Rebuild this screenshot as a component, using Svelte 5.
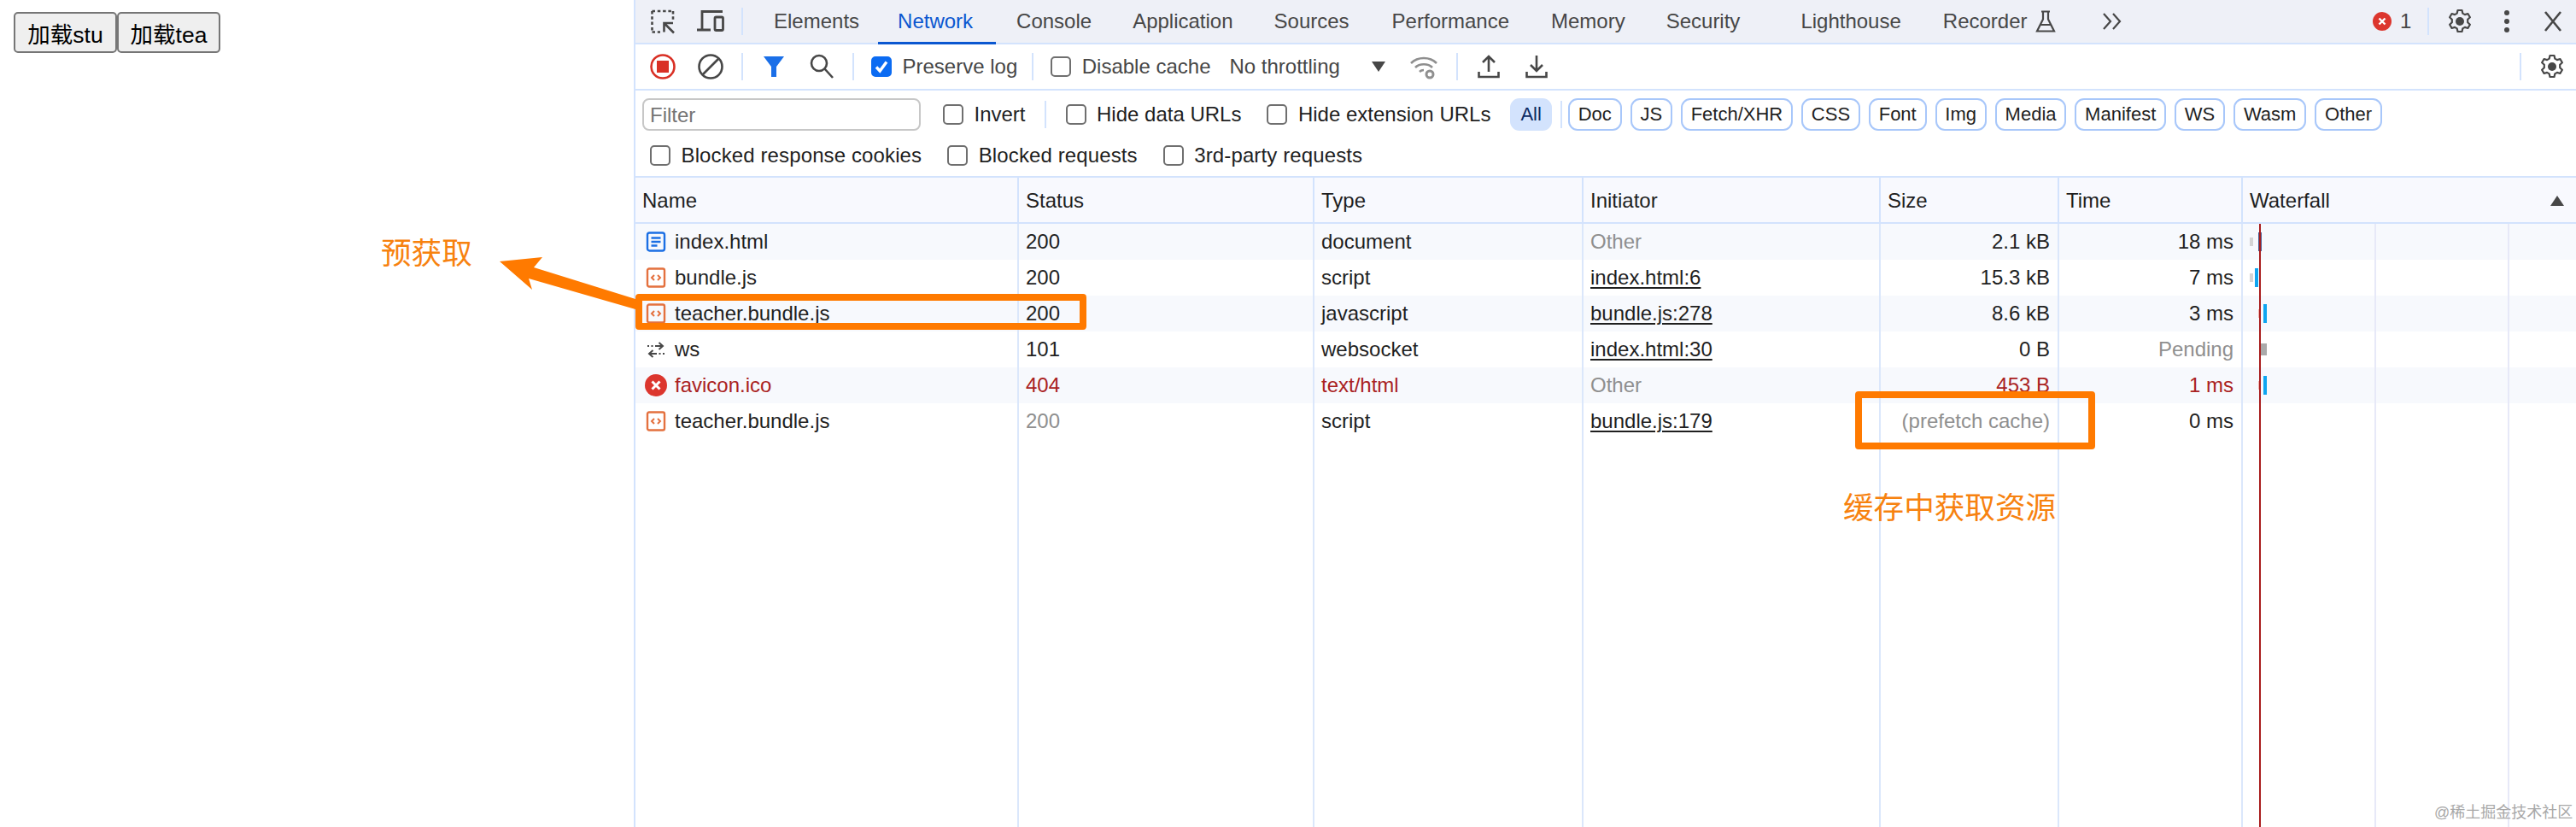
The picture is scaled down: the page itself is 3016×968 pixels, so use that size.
<script>
  const tabs = ['Elements', 'Network', 'Console', 'Application', 'Sources', 'Performance', 'Memory', 'Security'];
  const pills = ['Doc', 'JS', 'Fetch/XHR', 'CSS', 'Font', 'Img', 'Media', 'Manifest', 'WS', 'Wasm', 'Other'];
  const head = ['Name', 'Status', 'Type', 'Initiator', 'Size', 'Time'];
  const rows = [
    { icon: 'doc', name: 'index.html', status: '200', type: 'document', init: 'Other', size: '2.1 kB', time: '18 ms',
      bars: [{ l: 8, t: 16, w: 4, h: 10, c: '#d4d4d4' }, { l: 18, t: 10, w: 4, h: 22, c: '#4a5f94' }] },
    { icon: 'script', name: 'bundle.js', status: '200', type: 'script', init: 'index.html:6', size: '15.3 kB', time: '7 ms',
      bars: [{ l: 8, t: 16, w: 4, h: 10, c: '#d4d4d4' }, { l: 14, t: 10, w: 4, h: 22, c: '#0ea5f0' }] },
    { icon: 'script', name: 'teacher.bundle.js', status: '200', type: 'javascript', init: 'bundle.js:278', size: '8.6 kB', time: '3 ms',
      bars: [{ l: 18, t: 16, w: 2, h: 10, c: '#f3b3ae' }, { l: 24, t: 10, w: 4, h: 22, c: '#0ea5f0' }] },
    { icon: 'ws', name: 'ws', status: '101', type: 'websocket', init: 'index.html:30', size: '0 B', time: 'Pending', timeDim: true,
      bars: [{ l: 21, t: 14, w: 7, h: 14, c: '#aaaaaa' }] },
    { icon: 'err', name: 'favicon.ico', status: '404', type: 'text/html', init: 'Other', size: '453 B', time: '1 ms', err: true,
      bars: [{ l: 18, t: 16, w: 2, h: 10, c: '#f3b3ae' }, { l: 24, t: 10, w: 4, h: 22, c: '#0ea5f0' }] },
    { icon: 'script', name: 'teacher.bundle.js', status: '200', statusDim: true, type: 'script', init: 'bundle.js:179', size: '(prefetch cache)', sizeDim: true, time: '0 ms', bars: [] }
  ];
  const isLink = (r) => r.init !== 'Other';
</script>

{#snippet gear()}
  <svg class="i30" viewBox="0 0 30 30" fill="none" stroke="#474747" stroke-width="2.2" stroke-linejoin="round">
    <path d="M12.500 2h5l.8 3.600 2.600 1.500 3.500-1.100 2.500 4.300-2.700 2.500v3.400l2.700 2.500-2.500 4.300-3.500-1.100-2.600 1.500-.8 3.600h-5l-.8-3.600-2.600-1.500-3.500 1.100-2.500-4.300 2.700-2.500v-3.400l-2.700-2.500 2.500-4.300 3.500 1.100 2.600-1.500z"/>
    <circle cx="15" cy="15" r="5" fill="#474747" stroke="none"/>
  </svg>
{/snippet}

{#snippet check(label, on)}
  <span class="chk">
    <span class="box" class:on>
      {#if on}
        <svg viewBox="0 0 24 24" fill="none" stroke="#fff" stroke-width="3.400"><path d="M6 12.500l4.200 4.500L18 6.500"/></svg>
      {/if}
    </span>
    {label}
  </span>
{/snippet}

{#snippet rowIcon(kind)}
  {#if kind === 'doc'}
    <svg class="ri" viewBox="0 0 24 24" fill="none" stroke="#1b6fe4" stroke-width="2.400"><rect x="2" y="1.500" width="20" height="21" rx="2.500"/><path d="M6.500 7.500h11M6.500 12h11M6.500 16.500h7"/></svg>
  {:else if kind === 'script'}
    <svg class="ri" viewBox="0 0 24 24" fill="none" stroke="#e4713f" stroke-width="2.400"><rect x="2" y="1.500" width="20" height="21" rx="2"/><path d="M10 9l-3 3 3 3M14 9l3 3-3 3" stroke-width="2"/></svg>
  {:else if kind === 'ws'}
    <svg class="ri" viewBox="0 0 24 24" fill="none" stroke="#474747" stroke-width="2"><path d="M2 8h2M6.500 8h2M11 8h8M15.500 4l4.500 4-4.500 4" /><path d="M22 17h-2M17.500 17h-2M13 17H5M8.500 13L4 17l4.500 4" /></svg>
  {:else}
    <svg class="ri big" viewBox="0 0 26 26"><circle cx="13" cy="13" r="13" fill="#dc362e"/><path d="M8.500 8.500l9 9M17.500 8.500l-9 9" stroke="#fff" stroke-width="3"/></svg>
  {/if}
{/snippet}

<div class="screen">
  <section class="page">
    <button>加载stu</button><button class="second">加载tea</button>
  </section>

  <section class="devtools">
    <div class="bar tabs">
      <span class="btn">
        <svg class="i30" viewBox="0 0 30 30" fill="none" stroke="#474747" stroke-width="2.600">
          <path d="M2.500 3h24.500M2.500 3v24.500" stroke-dasharray="3.500 2.800"/>
          <path d="M27 3v11M2.500 27.500H12" stroke-dasharray="3.500 2.800"/>
          <path d="M27 17H16.500V27.500M16.500 17L28 28.500" />
        </svg>
      </span>
      <span class="btn">
        <svg class="i34" viewBox="0 0 34 30" fill="none" stroke="#474747" stroke-width="2.800">
          <path d="M7 24V3.500h24"/><path d="M1 25h16" stroke-width="3"/><rect x="22" y="10" width="9.500" height="15.500" rx="1.500"/>
        </svg>
      </span>
      <span class="sep"></span>
      <div class="tablist">
        {#each tabs as t}
          <span class="tab" class:active={t === 'Network'} class:gap={t === 'Security'}>{t}</span>
        {/each}
        <span class="tab light">Lighthouse</span>
        <span class="tab recorder">
          Recorder
          <svg class="flask" viewBox="0 0 24 26" fill="none" stroke="#474747" stroke-width="2.200"><path d="M7 1.500h10M9 1.500v9L2 24.500h20l-7-14v-9M6 17h12"/></svg>
        </span>
      </div>
      <svg class="more" viewBox="0 0 24 22" fill="none" stroke="#474747" stroke-width="2.200"><path d="M2 2l8 9-8 9M13 2l8 9-8 9"/></svg>
      <span class="errs">
        <svg class="errdot" viewBox="0 0 22 22"><circle cx="11" cy="11" r="11" fill="#dc362e"/><path d="M7.500 7.500l7 7M14.500 7.500l-7 7" stroke="#fff" stroke-width="2.400"/></svg>
        1
      </span>
      <span class="sep"></span>
      <span class="btn">{@render gear()}</span>
      <span class="btn narrow">
        <svg class="i30" viewBox="0 0 30 30" fill="#474747"><circle cx="15" cy="5" r="3"/><circle cx="15" cy="15" r="3"/><circle cx="15" cy="25" r="3"/></svg>
      </span>
      <span class="btn narrow">
        <svg class="i30" viewBox="0 0 30 30" fill="none" stroke="#474747" stroke-width="2.600"><path d="M6 4l18 22M24 4L6 26"/></svg>
      </span>
    </div>

    <div class="bar tools">
      <span class="btn">
        <svg class="i30" viewBox="0 0 30 30"><circle cx="15" cy="15" r="13.500" fill="none" stroke="#d93025" stroke-width="2.600"/><rect x="8" y="8" width="14" height="14" fill="#d93025"/></svg>
      </span>
      <span class="btn">
        <svg class="i30" viewBox="0 0 30 30" fill="none" stroke="#474747" stroke-width="2.600"><circle cx="15" cy="15" r="13.500"/><path d="M24.500 5.500L5.500 24.500"/></svg>
      </span>
      <span class="sep"></span>
      <span class="btn">
        <svg class="i24" viewBox="0 0 24 24" fill="#1a6fe8"><path d="M0 0h24L15 12v12H9V12z"/></svg>
      </span>
      <span class="btn">
        <svg class="i30" viewBox="0 0 30 30" fill="none" stroke="#474747" stroke-width="2.600"><circle cx="12" cy="11" r="9"/><path d="M18.500 17.500L28 28"/></svg>
      </span>
      <span class="sep"></span>
      <span class="m12"></span>
      {@render check('Preserve log', true)}
      <span class="sep sep-a"></span>
      {@render check('Disable cache', false)}
      <span class="throttle">No throttling</span>
      <span class="tri"></span>
      <svg class="wifi" viewBox="0 0 32 32" fill="none" stroke="#8f8f8f" stroke-width="2.600">
        <path d="M1 12c8-8 22-8 30 0M6 17c5-5 15-5 20 0M11 22c1.500-1.500 3-2 5-2"/>
        <circle cx="23" cy="25" r="4" stroke-width="3"/>
      </svg>
      <span class="sep sep-b"></span>
      <span class="btn">
        <svg class="i30" viewBox="0 0 30 30" fill="none" stroke="#474747" stroke-width="2.600"><path d="M15 21V3M8 10l7-7 7 7M3.500 21v6h23v-6"/></svg>
      </span>
      <span class="btn">
        <svg class="i30" viewBox="0 0 30 30" fill="none" stroke="#474747" stroke-width="2.600"><path d="M15 2v18M8 13l7 7 7-7M3.500 21v6h23v-6"/></svg>
      </span>
      <span class="sep push"></span>
      <span class="btn">{@render gear()}</span>
    </div>

    <div class="bar filters">
      <span class="filter">Filter</span>
      <span class="m26"></span>
      {@render check('Invert', false)}
      <span class="sep sep-c"></span>
      {@render check('Hide data URLs', false)}
      <span class="m30"></span>
      {@render check('Hide extension URLs', false)}
      <span class="pill all">All</span>
      <span class="sep sep-d"></span>
      <div class="pills">
        {#each pills as p}
          <span class="pill">{p}</span>
        {/each}
      </div>
    </div>

    <div class="bar blocked">
      {@render check('Blocked response cookies', false)}
      {@render check('Blocked requests', false)}
      {@render check('3rd-party requests', false)}
    </div>

    <div class="table">
      <div class="row header">
        {#each head as h}<span class="cell">{h}</span>{/each}
        <span class="cell wfh">Waterfall<span class="sort"></span></span>
      </div>
      {#each rows as r, i}
        <div class="row" class:striped={i % 2 === 0} class:err={r.err}>
          <span class="cell namecell">{@render rowIcon(r.icon)}{r.name}</span>
          <span class="cell" class:dim={r.statusDim}>{r.status}</span>
          <span class="cell">{r.type}</span>
          <span class="cell" class:dim={!isLink(r)} class:link={isLink(r)}>{r.init}</span>
          <span class="cell num" class:dim={r.sizeDim}>{r.size}</span>
          <span class="cell num" class:dim={r.timeDim}>{r.time}</span>
          <span class="cell wf">
            {#each r.bars as b}
              <i class="barb" style="left:{b.l}px;top:{b.t}px;width:{b.w}px;height:{b.h}px;background:{b.c}"></i>
            {/each}
          </span>
        </div>
      {/each}
      <div class="row filler">
        {#each Array(7) as _}<span class="cell"></span>{/each}
      </div>
      <i class="gridline g1"></i>
      <i class="gridline g2"></i>
      <i class="redline"></i>
    </div>
  </section>

  <svg class="arrow" viewBox="0 0 3016 968" aria-hidden="true">
    <path d="M585 306L635 301L625 313L744 350V362L619 326L623 339Z" fill="#ff7a00"/>
  </svg>
  <div class="mark m1"></div>
  <div class="mark m2"></div>
  <div class="note n1">预获取</div>
  <div class="note n2">缓存中获取资源</div>
  <div class="watermark">@稀土掘金技术社区</div>
</div>

<style>
  :global(body) { margin: 0; background: #fff; }
  .screen {
    position: relative;
    display: flex;
    width: 3016px;
    height: 968px;
    overflow: hidden;
    font-family: "Liberation Sans", "Noto Sans CJK SC", sans-serif;
    font-size: 24px;
    color: #1f1f1f;
  }
  .page { width: 742px; box-sizing: border-box; padding: 14px 0 0 16px; flex: none; }
  button {
    height: 48px;
    width: 121px;
    padding: 0;
    border: 2px solid #767676;
    border-radius: 5px;
    background: #efefef;
    color: #000;
    font: 26.5px "Liberation Sans", "Noto Sans CJK SC", sans-serif;
    vertical-align: top;
  }
  .second { width: 121px; }

  .devtools {
    flex: 1;
    display: flex;
    flex-direction: column;
    border-left: 2px solid #d3e3fd;
    min-width: 0;
  }
  .bar { display: flex; align-items: center; flex: none; box-sizing: border-box; padding-left: 4px; }
  .btn { width: 56px; display: flex; justify-content: center; align-items: center; flex: none; }
  .btn.narrow { width: 54px; }
  .sep { width: 2px; height: 32px; background: #d3e3fd; margin: 0 8px; flex: none; }
  .i30 { width: 30px; height: 30px; display: block; }
  .i34 { width: 34px; height: 30px; display: block; }
  .i24 { width: 24px; height: 24px; display: block; }

  .tabs { height: 52px; background: #eef0f7; border-bottom: 2px solid #d3e3fd; color: #474747; }
  .tablist { display: flex; align-self: flex-start; height: 52px; margin-left: 4px; }
  .tab {
    display: flex; align-items: center; gap: 9px;
    box-sizing: border-box; height: 52px; padding: 0 24px;
    border-bottom: 3px solid transparent;
  }
  .tab:nth-child(1) { padding-right: 22px; }
  .tab:nth-child(2) { padding: 0 27px 0 23px; }
  .tab:nth-child(5) { padding-right: 26px; }
  .tab:nth-child(6) { padding-right: 25px; }
  .tab.active { color: #0b57d0; border-bottom-color: #0b57d0; }
  .tab.gap { margin-right: 23px; }
  .tab.light { padding-right: 25px; }
  .flask { width: 24px; height: 26px; }
  .more { width: 24px; height: 22px; margin-left: 30px; flex: none; }
  .errs { margin-left: auto; display: flex; align-items: center; gap: 10px; width: 56px; flex: none; }
  .errdot { width: 22px; height: 22px; flex: none; }

  .tools { height: 54px; border-bottom: 2px solid #d3e3fd; color: #474747; }
  .m12 { width: 12px; flex: none; }
  .m26 { width: 26px; flex: none; }
  .m30 { width: 30px; flex: none; }
  .chk { display: inline-flex; align-items: center; gap: 12.5px; white-space: nowrap; flex: none; }
  .box {
    box-sizing: border-box; width: 24px; height: 24px;
    border: 2px solid #6f6f6f; border-radius: 5px; background: #fff; flex: none;
  }
  .box.on { background: #0b6bf2; border-color: #0b6bf2; }
  .box svg { display: block; width: 24px; height: 24px; margin: -2px; }
  .sep-a { margin: 0 20px 0 17px; }
  .throttle { margin-left: 22px; }
  .tri {
    margin-left: 37px; width: 0; height: 0; flex: none;
    border-left: 8px solid transparent; border-right: 8px solid transparent; border-top: 12px solid #474747;
  }
  .wifi { width: 32px; height: 32px; margin-left: 29px; flex: none; }
  .sep-b { margin: 0 8px 0 22px; }
  .push { margin-left: auto; }

  .filters { height: 51px; padding: 5px 0 0 8px; color: #1f1f1f; }
  .filter {
    box-sizing: border-box; width: 326px; height: 38px; line-height: 36px;
    border: 2px solid #c7c7c7; border-radius: 8px; padding-left: 7px; color: #757575;
  }
  .sep-c { margin: 0 23px 0 22px; }
  .sep-d { margin: 0 7px 0 10px; height: 32px; }
  .pills { display: flex; gap: 10px; }
  .pill {
    box-sizing: border-box; height: 38px; line-height: 34px; padding: 0 9.8px;
    border: 2px solid #a8c7fa; border-radius: 11px; font-size: 22px; color: #1f1f1f; flex: none;
  }
  .all { margin-left: 23px; background: #d3e3fd; border-color: #d3e3fd; color: #0a2a63; padding: 0 10px; }

  .blocked {
    height: 51px; padding: 0 0 0 17px; gap: 30px;
    border-bottom: 2px solid #d3e3fd; color: #1f1f1f; letter-spacing: 0.12px;
  }

  .table { position: relative; flex: 1; display: flex; flex-direction: column; min-height: 0; }
  .row {
    display: grid;
    grid-template-columns: 449px 346px 315px 348px 209px 215px 1fr;
    height: 42px; flex: none;
  }
  .row.striped { background: #f7f9fd; }
  .row.err { color: #aa2222; }
  .row.header { height: 54px; background: #f8f9fe; border-bottom: 2px solid #d3e3fd; box-sizing: border-box; }
  .row.filler { flex: 1; height: auto; }
  .cell {
    box-sizing: border-box;
    border-right: 2px solid #dbe7fb;
    padding: 0 8px;
    line-height: 42px;
    white-space: nowrap;
    min-width: 0;
  }
  .header .cell { line-height: 54px; border-right-color: #d3e3fd; }
  .cell:last-child { border-right: 0; }
  .cell.num { text-align: right; padding-right: 9px; }
  .namecell { display: flex; align-items: center; gap: 10px; padding-left: 12px; }
  .ri { width: 24px; height: 24px; flex: none; }
  .ri.big { width: 26px; height: 26px; margin: 0 -1px; }
  .dim { color: #8f8f8f; }
  .err .dim { color: #8f8f8f; }
  .link { text-decoration: underline; text-underline-offset: 3px; text-decoration-thickness: 2px; color: #1f1f1f; }
  .err .num { color: #aa2222; }
  .wfh { display: flex; align-items: center; justify-content: space-between; padding-right: 14px; }
  .sort {
    width: 0; height: 0;
    border-left: 8px solid transparent; border-right: 8px solid transparent; border-bottom: 12px solid #474747;
  }
  .wf { position: relative; }
  .barb { position: absolute; display: block; }
  .gridline { position: absolute; top: 54px; bottom: 0; width: 2px; background: #e7e9f8; }
  .g1 { left: 2036px; }
  .g2 { left: 2192px; }
  .redline { position: absolute; top: 54px; bottom: 0; left: 1901px; width: 2px; background: #a81c1c; }

  .arrow { position: absolute; inset: 0; width: 3016px; height: 968px; pointer-events: none; }
  .mark { position: absolute; box-sizing: border-box; border: 8px solid #ff7a00; border-radius: 4px; }
  .m1 { left: 744px; top: 344px; width: 528px; height: 42px; }
  .m2 { left: 2172px; top: 458px; width: 281px; height: 68px; }
  .note { position: absolute; color: #f7820f; font-size: 35.6px; line-height: 36px; white-space: nowrap; }
  .n1 { left: 446px; top: 279px; }
  .n2 { left: 2158px; top: 577px; }
  .watermark { position: absolute; left: 2850px; top: 941px; font-size: 18px; line-height: 20px; color: #a8a8a8; white-space: nowrap; }
</style>
